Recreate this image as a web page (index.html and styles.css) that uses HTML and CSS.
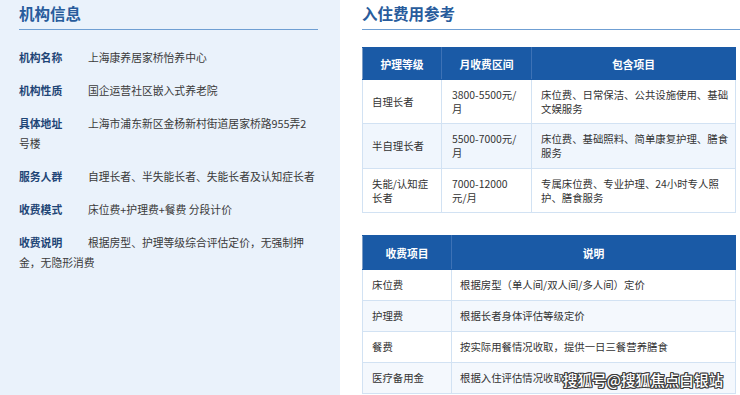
FILE: index.html
```html
<!DOCTYPE html>
<html lang="zh-CN">
<head>
<meta charset="utf-8">
<title>机构信息</title>
<link rel="stylesheet" href="styles.css">
</head>
<body>
<div class="page">
  <section class="info-panel">
    <h2 class="section-title">机构信息</h2>
    <div class="info-list">
      <p class="info-row"><span class="info-label">机构名称</span>上海康养居家桥怡养中心</p>
      <p class="info-row"><span class="info-label">机构性质</span>国企运营社区嵌入式养老院</p>
      <p class="info-row"><span class="info-label">具体地址</span>上海市浦东新区金杨新村街道居家桥路955弄2<br>号楼</p>
      <p class="info-row"><span class="info-label">服务人群</span>自理长者、半失能长者、失能长者及认知症长者</p>
      <p class="info-row"><span class="info-label">收费模式</span>床位费+护理费+餐费 分段计价</p>
      <p class="info-row"><span class="info-label">收费说明</span>根据房型、护理等级综合评估定价，无强制押<br>金，无隐形消费</p>
    </div>
  </section>
  <section class="fee-panel">
    <h2 class="section-title">入住费用参考</h2>
    <table class="fee-table level-table">
      <colgroup><col class="c1"><col class="c2"><col class="c3"></colgroup>
      <thead>
        <tr><th>护理等级</th><th>月收费区间</th><th>包含项目</th></tr>
      </thead>
      <tbody>
        <tr class="r1"><td>自理长者</td><td>3800-5500元/<br>月</td><td>床位费、日常保洁、公共设施使用、基础<br>文娱服务</td></tr>
        <tr class="r2"><td>半自理长者</td><td>5500-7000元/<br>月</td><td>床位费、基础照料、简单康复护理、膳食<br>服务</td></tr>
        <tr class="r3"><td>失能/认知症<br>长者</td><td>7000-12000<br>元/月</td><td>专属床位费、专业护理、24小时专人照<br>护、膳食服务</td></tr>
      </tbody>
    </table>
    <table class="fee-table item-table">
      <colgroup><col class="k1"><col class="k2"></colgroup>
      <thead>
        <tr><th>收费项目</th><th>说明</th></tr>
      </thead>
      <tbody>
        <tr><td>床位费</td><td>根据房型（单人间/双人间/多人间）定价</td></tr>
        <tr><td>护理费</td><td>根据长者身体评估等级定价</td></tr>
        <tr><td>餐费</td><td>按实际用餐情况收取，提供一日三餐营养膳食</td></tr>
        <tr><td>医疗备用金</td><td>根据入住评估情况收取</td></tr>
      </tbody>
    </table>
  </section>
</div>
<div class="watermark">搜狐号@搜狐焦点白银站</div>
</body>
</html>
```

FILE: styles.css
```css
html, body {
  margin: 0;
  padding: 0;
  width: 740px;
  height: 395px;
  overflow: hidden;
  background: #ffffff;
  font-family: "Noto Sans CJK SC", "Noto Sans", sans-serif;
  color: #333333;
}

.page {
  display: flex;
  height: 395px;
}

.info-panel {
  width: 340px;
  box-sizing: border-box;
  padding: 3px 22px 0 19px;
  background: #eaf2fb;
  flex: none;
}

.section-title {
  margin: 0;
  font-size: 15.5px;
  line-height: 20px;
  font-weight: 700;
  color: #285c9c;
  padding-bottom: 6px;
  border-bottom: 1px solid #6f9fd3;
}

.info-list {
  margin-top: 17px;
  margin-right: -1px;
}

.info-row {
  margin: 0 0 13px;
  font-size: 10.8px;
  line-height: 20px;
  color: #3a3a3a;
}

.info-label {
  padding-right: 25.8px;
  font-weight: 700;
  color: #1e4576;
}

.fee-panel {
  flex: 1;
  padding: 3px 5px 0 22px;
}

.fee-panel .section-title {
  margin-right: -5px;
}

.fee-table {
  width: 373px;
  border-collapse: collapse;
  table-layout: fixed;
  font-size: 10.4px;
  color: #333333;
}

.level-table {
  margin-top: 17px;
}

.item-table {
  margin-top: 22px;
}

.fee-table th {
  background: #1a5aa6;
  color: #ffffff;
  font-weight: 700;
  font-size: 10.8px;
  text-align: center;
  padding: 0;
  border: 1px solid #1a5aa6;
  border-right-color: #3d72b6;
}

.fee-table th:first-child {
  border-left-color: #7c9cc4;
}

.fee-table th:last-child {
  border-right-color: #1a5aa6;
}

.fee-table td {
  border: 1px solid #d2e2f3;
  padding: 0 6px 0 9px;
  vertical-align: middle;
  white-space: nowrap;
  line-height: 14px;
}

.level-table thead tr { height: 32px; }
.level-table .r1 { height: 44px; }
.level-table .r2 { height: 45px; }
.level-table .r3 { height: 44px; }
.level-table .r2 td { background: #f0f6fd; }
.level-table td:nth-child(2) { padding-left: 10px; }

.c1 { width: 79px; }
.c2 { width: 90px; }
.c3 { width: 204px; }

.k1 { width: 89px; }
.k2 { width: 284px; }

.item-table thead tr { height: 34px; }
.item-table tbody tr { height: 31px; }
.item-table tbody tr:nth-child(even) td { background: #f4f8fd; }
.item-table td:nth-child(2) { padding-left: 8px; }

.watermark {
  position: absolute;
  left: 563px;
  top: 369px;
  font-size: 14.6px;
  line-height: 22px;
  font-weight: 500;
  color: #ffffff;
  text-shadow:
    1px 0 0 #3c3c3c, -1px 0 0 #3c3c3c, 0 1px 0 #3c3c3c, 0 -1px 0 #3c3c3c,
    1px 1px 0 #3c3c3c, -1px -1px 0 #3c3c3c, 1px -1px 0 #3c3c3c, -1px 1px 0 #3c3c3c;
}
```
